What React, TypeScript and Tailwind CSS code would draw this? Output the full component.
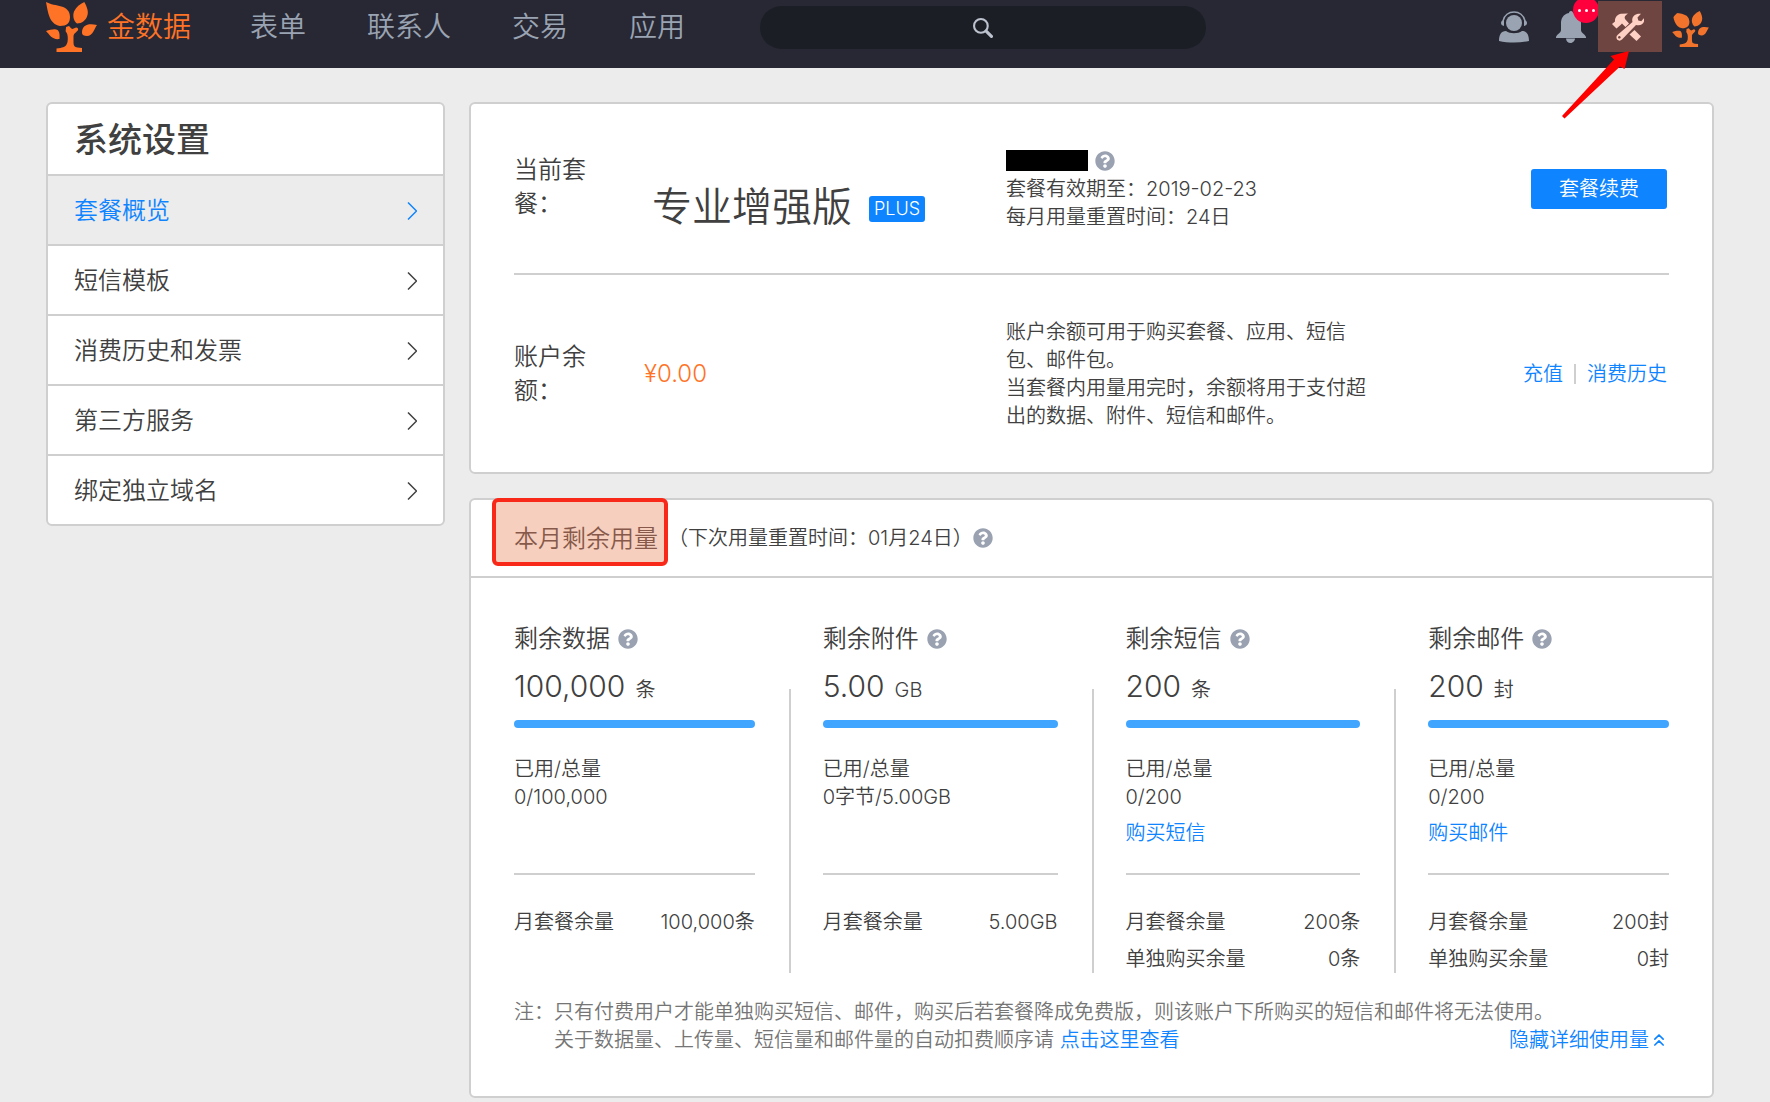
import React from 'react';
import { FaQuestionCircle } from 'react-icons/fa';
import { ChevronsUp } from 'lucide-react';

interface LeafLogoProps {
  className?: string;
}

const LeafLogo: React.FC<LeafLogoProps> = ({ className = '' }) => (
  <svg viewBox="0 0 51 50" fill="currentColor" className={className} aria-hidden="true">
    <path d="M0 0C9 5 24 2 24 15c0 6-3 9-10 9C3 22 2 10 0 0Z" />
    <path d="M38.3 0C41 5 42.500 9 41.500 13 40 18.500 36 21.500 31 21.500 27.500 19 26.500 14 28 9.500 30 5 34 2 38.300 0Z" />
    <path d="M51 23c-3 4-4 11-10 11-3 0-5-1-5-3 0-8 6-10 15-8Z" />
    <path d="M0 29c4-1 7-2 10-1.500C13 28 14 31 13.500 37 6 38 4 33 0 29Z" />
    <path d="M20 25l3-1c1 1 2 2.500 3.500 3l3.500-1.500c2 0 2.500 1.500 2 2.500-1 2-4 3-4.500 6V40c0 4 1 5 4 5.500l4.500.5v4H10.500v-3.500l4-.5c4-1 6-2 7-6 .5-3 .5-7-1-9.500C19 29 20 28 20 25Z" />
  </svg>
);

const HeadsetIcon = () => (
  <svg viewBox="0 0 30 32" fill="currentColor" className="h-8 w-[30px]" aria-hidden="true">
    <circle cx="15" cy="12" r="8" />
    <path d="M4 10C5 4 10 1 15 1s10 3 11 9" fill="none" stroke="currentColor" strokeWidth="1.500" />
    <path d="M5 9v6c-4-.5-4-5.500 0-6ZM25 9v6c4-.5 4-5.500 0-6Z" />
    <path d="M0 30c0-6 2-10 7-10 4 3 12 3 16 0 5 0 7 4 7 10-9 2-21 2-30 0Z" />
  </svg>
);

const BellIcon = () => (
  <svg viewBox="0 0 30 32" fill="currentColor" className="h-8 w-[30px]" aria-hidden="true">
    <path d="M15 0c1.500 0 2 1 2 2 6 1 8 6 8 10v7c0 3 4 4 5 7v1H0v-1c1-3 5-4 5-7v-7C5 8 7 3 13 2c0-1 .5-2 2-2Z" />
    <path d="M10 27.500h9c0 2-2 4.500-4.500 4.500S10 30 10 27.500Z" />
  </svg>
);

const ToolsIcon = () => (
  <svg viewBox="0 0 32 28" fill="currentColor" className="h-7 w-8" aria-hidden="true">
    <path d="M0 11l3-2.500C2.500 4 6 1 9 .7l7-.2c-3 2-4 3.500-3 5.500l4 4.500L13.500 14 10 10.500 8.500 12 4.500 15.500Z" />
    <path d="M17.500 21.500l5-4.500 6.500 6.500-4.500 4.500Z" />
    <path
      fillRule="evenodd"
      d="M20.500 9C19 4 23 0 29 .8L25.500 4.500l.8 3 3 .7 2.500-3C33.500 10 29 13.500 24 12L10 26.500c-2.500 2.500-6 .5-5.500-2.500 0-1 .5-1.500 1.500-2.500ZM7.300 23a1.300 1.300 0 1 0 .1 0Z"
    />
  </svg>
);

const SearchIcon = () => (
  <svg viewBox="0 0 19 19" fill="none" stroke="currentColor" className="h-5 w-5" aria-hidden="true">
    <circle cx="7.500" cy="7.500" r="6.500" strokeWidth="2" />
    <path d="M12.500 12.500l5 5" strokeWidth="3" strokeLinecap="round" />
  </svg>
);

const ChevronIcon = () => (
  <svg viewBox="0 0 10 18" fill="none" stroke="currentColor" strokeWidth="1.500" className="h-[18px] w-[10px]" aria-hidden="true">
    <path d="M1 .5L9.500 9 1 17.500" />
  </svg>
);

const HelpButton = () => (
  <button type="button" aria-label="帮助" className="shrink-0 text-[#9aa2b1]">
    <FaQuestionCircle className="h-5 w-5" />
  </button>
);

const navItems = ['表单', '联系人', '交易', '应用'];
const menuItems = ['套餐概览', '短信模板', '消费历史和发票', '第三方服务', '绑定独立域名'];

interface Usage {
  title: string;
  amount: string;
  unit: string;
  used: string;
  buy?: string;
  details: { label: string; value: string }[];
}

const usages: Usage[] = [
  {
    title: '剩余数据',
    amount: '100,000',
    unit: '条',
    used: '0/100,000',
    details: [{ label: '月套餐余量', value: '100,000条' }],
  },
  {
    title: '剩余附件',
    amount: '5.00',
    unit: 'GB',
    used: '0字节/5.00GB',
    details: [{ label: '月套餐余量', value: '5.00GB' }],
  },
  {
    title: '剩余短信',
    amount: '200',
    unit: '条',
    used: '0/200',
    buy: '购买短信',
    details: [
      { label: '月套餐余量', value: '200条' },
      { label: '单独购买余量', value: '0条' },
    ],
  },
  {
    title: '剩余邮件',
    amount: '200',
    unit: '封',
    used: '0/200',
    buy: '购买邮件',
    details: [
      { label: '月套餐余量', value: '200封' },
      { label: '单独购买余量', value: '0封' },
    ],
  },
];

const Header = () => (
  <header className="flex h-[68px] items-start bg-[#272834] pr-[60px] pl-[46px] text-[28px] leading-[54px]">
    <a href="#" className="flex items-start gap-2.5 text-[#ff7326]">
      <LeafLogo className="mt-[2px] h-[50px] w-[51px]" />
      金数据
    </a>
    <nav className="ml-[59px] flex gap-[61px] text-[#9aa3b2]">
      {navItems.map((item) => (
        <a key={item} href="#">{item}</a>
      ))}
    </nav>
    <label className="relative mt-1.5 ml-[75px] flex w-[446px] items-center justify-center text-[#bcc2ce]">
      <input type="search" aria-label="搜索" className="h-[43px] w-full rounded-full bg-[#1c1e26] px-6 text-lg outline-none" />
      <span className="pointer-events-none absolute">
        <SearchIcon />
      </span>
    </label>
    <div className="ml-auto flex items-start text-[#9aa3b2]">
      <button type="button" aria-label="客服" className="mt-[11px]">
        <HeadsetIcon />
      </button>
      <button type="button" aria-label="通知" className="relative mt-[11px] ml-[27px]">
        <BellIcon />
        <span className="absolute -top-3.5 left-[17px] flex h-[26px] w-[26px] items-center justify-center gap-1 rounded-full bg-[#ff003c]">
          <i className="h-[3px] w-[3px] rounded-full bg-white" />
          <i className="h-[3px] w-[3px] rounded-full bg-white" />
          <i className="h-[3px] w-[3px] rounded-full bg-white" />
        </span>
      </button>
      <button
        type="button"
        aria-label="系统设置"
        className="relative mt-px ml-3 flex h-[51px] w-16 items-center justify-center bg-[#6e4540] pr-1 text-[#ffd0c4]"
      >
        <ToolsIcon />
        <svg viewBox="0 0 68 68" className="pointer-events-none absolute top-[50px] -left-9 h-[68px] w-[68px]" fill="#ff0000" aria-hidden="true">
          <path d="M67 0L62.500 18 58 15.500 2.500 67.500 0 65 52 8.500 48.500 5Z" />
        </svg>
      </button>
      <a href="#" aria-label="账户" className="mt-[11px] ml-[9px] text-[#f2742c]">
        <LeafLogo className="h-9 w-[39px] rounded-tl-[14px]" />
      </a>
    </div>
  </header>
);

const Sidebar = () => (
  <aside className="w-[399px] shrink-0 overflow-hidden rounded-md border-2 border-[#cfcfcf] bg-white">
    <h1 className="px-[26px] pt-0.5 text-[34px] leading-[68px] font-medium">系统设置</h1>
    <nav>
      {menuItems.map((item, i) => (
        <a
          key={item}
          href="#"
          className={`flex items-center justify-between border-t-2 border-[#cfcfcf] px-[26px] pt-0.5 text-2xl leading-[66px] ${
            i === 0 ? 'bg-[#ececec] text-[#0f84ff]' : ''
          }`}
        >
          {item}
          <ChevronIcon />
        </a>
      ))}
    </nav>
  </aside>
);

const PlanCard = () => (
  <section className="rounded-md border-2 border-[#cfcfcf] bg-white px-[43px] leading-7">
    <div className="flex h-[169px] items-center">
      <h2 className="mb-1 w-[138px] shrink-0 pr-[62px] text-2xl leading-[34px]">当前套餐：</h2>
      <div className="mt-9 flex w-[354px] shrink-0 items-center gap-[17px]">
        <span className="text-[40px] leading-[48px]">专业增强版</span>
        <span className="mt-1 rounded-[3px] bg-[#0f84ff] px-[5px] text-lg leading-[26px] text-white">PLUS</span>
      </div>
      <div>
        <div className="flex h-7 items-center gap-[7px]">
          <span className="h-[21px] w-[82px] bg-black" />
          <HelpButton />
        </div>
        <p>套餐有效期至：2019-02-23</p>
        <p>每月用量重置时间：24日</p>
      </div>
      <button type="button" className="mr-0.5 ml-auto h-10 rounded-[3px] bg-[#0f84ff] px-7 text-white">
        套餐续费
      </button>
    </div>
    <div className="flex h-[199px] items-center border-t-2 border-[#cfcfcf]">
      <h2 className="w-[130px] shrink-0 pr-[54px] text-2xl leading-[34px]">账户余额：</h2>
      <span className="w-[362px] shrink-0 text-2xl text-[#ff7326]">¥0.00</span>
      <div className="w-[370px]">
        <p>账户余额可用于购买套餐、应用、短信包、邮件包。</p>
        <p>当套餐内用量用完时，余额将用于支付超出的数据、附件、短信和邮件。</p>
      </div>
      <div className="mr-0.5 ml-auto flex items-center gap-[11px] text-[#0f84ff]">
        <a href="#">充值</a>
        <span className="h-5 w-0.5 bg-[#cfcfcf]" />
        <a href="#">消费历史</a>
      </div>
    </div>
  </section>
);

const UsageColumn: React.FC<{ usage: Usage; first: boolean; last: boolean }> = ({ usage, first, last }) => (
  <div className={`flex ${first ? 'pl-7' : 'gap-8'} ${last ? 'pr-7' : 'pr-[34px]'}`}>
    {!first && <div className="mt-[67px] w-0.5 shrink-0 bg-[#cfcfcf]" />}
    <div className="min-w-0 flex-1">
      <h3 className="flex items-center gap-2 text-2xl leading-[34px]">
        {usage.title}
        <HelpButton />
      </h3>
      <div className="mt-3 flex h-9 items-baseline gap-2.5 leading-9">
        <span className="text-[30px]">{usage.amount}</span>
        <span>{usage.unit}</span>
      </div>
      <div className="mt-4 h-2 rounded-full bg-[#40a5ff]" />
      <div className="mt-[27px] h-[120px] border-b-2 border-[#cfcfcf]">
        <p>已用/总量</p>
        <p>{usage.used}</p>
        {usage.buy && (
          <a href="#" className="mt-2 inline-block text-[#0f84ff]">{usage.buy}</a>
        )}
      </div>
      <dl className="mt-[33px] flex flex-col gap-[9px]">
        {usage.details.map((row) => (
          <div key={row.label} className="flex justify-between">
            <dt>{row.label}</dt>
            <dd>{row.value}</dd>
          </div>
        ))}
      </dl>
    </div>
  </div>
);

const UsageCard = () => (
  <section className="mt-6 rounded-md border-2 border-[#cfcfcf] bg-white leading-7">
    <div className="flex h-[78px] items-start border-b-2 border-[#cfcfcf] pl-[21px]">
      <h2 className="-mt-0.5 h-[68px] rounded-md border-4 border-[#f9291a] bg-[#f6cfbf] pt-2 pr-1.5 pl-[18px] text-2xl leading-[58px] text-[#86594a]">
        本月剩余用量
      </h2>
      <div className="flex h-[76px] items-center">
        <span>（下次用量重置时间：01月24日）</span>
        <HelpButton />
      </div>
    </div>
    <div className="grid grid-cols-4 px-[15px] pt-11">
      {usages.map((usage, i) => (
        <UsageColumn key={usage.title} usage={usage} first={i === 0} last={i === usages.length - 1} />
      ))}
    </div>
    <div className="mt-[25px] flex px-[43px] pb-[42px] text-[#757575]">
      <span className="shrink-0">注：</span>
      <div className="flex-1">
        <p>只有付费用户才能单独购买短信、邮件，购买后若套餐降成免费版，则该账户下所购买的短信和邮件将无法使用。</p>
        <div className="flex justify-between">
          <p>
            关于数据量、上传量、短信量和邮件量的自动扣费顺序请{' '}
            <a href="#" className="text-[#0f84ff]">点击这里查看</a>
          </p>
          <button type="button" className="flex items-center text-[#0f84ff]">
            隐藏详细使用量
            <ChevronsUp className="h-5 w-5" strokeWidth={2} />
          </button>
        </div>
      </div>
    </div>
  </section>
);

export default function App() {
  return (
    <div className="min-h-screen bg-[#ececec] font-['Inter','Noto_Sans_CJK_SC',sans-serif] text-[20px] font-[350] text-[#404040]">
      <Header />
      <div className="flex items-start gap-6 pt-[34px] pr-14 pl-[46px]">
        <Sidebar />
        <main className="min-w-0 flex-1">
          <PlanCard />
          <UsageCard />
        </main>
      </div>
    </div>
  );
}
